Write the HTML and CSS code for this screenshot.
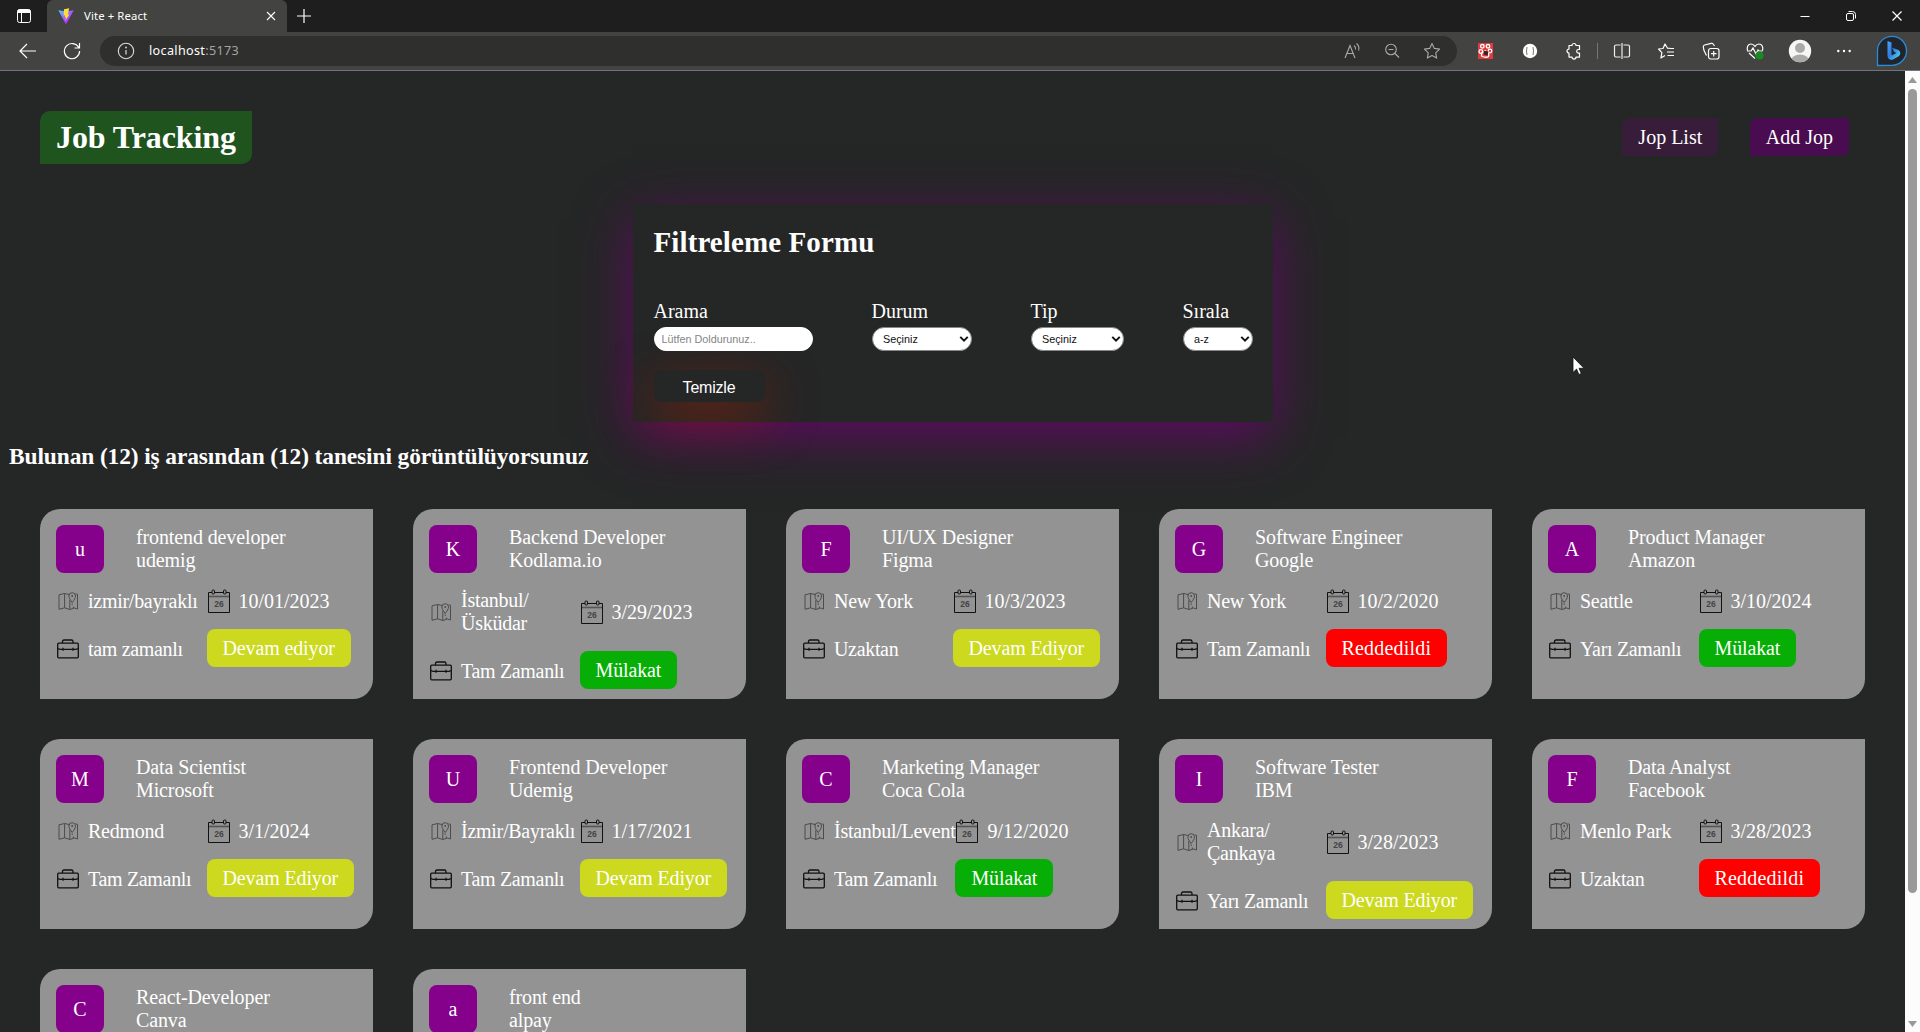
FILE: index.html
```html
<!DOCTYPE html>
<html lang="tr">
<head>
<meta charset="UTF-8">
<title>Vite + React</title>
<link rel="stylesheet" href="styles.css">
</head>
<body>
<svg class="sprite" aria-hidden="true">
  <symbol id="map" viewBox="0 0 24 24">
    <g fill="none" stroke="#4c4c4c" stroke-width="1">
      <path d="M13.500 5.600 8.600 4.500 3 5.800V20.300l5.600-1.500 5.200 1.700 4.700-1.500 3 1V5.200l-2-.3M8.600 4.500v14.300M13.800 11v9.500"/>
      <path d="M16.200 13.500C14.200 10.800 12.900 9 12.900 7a3.300 3.300 0 0 1 6.600 0c0 2-1.300 3.800-3.300 6.500z"/>
      <path d="M16.200 14.500v1.500M17.300 17.500v1.500" stroke-dasharray="1.500 1"/>
    </g>
    <circle cx="16.200" cy="7" r=".9" fill="#4c4c4c"/>
  </symbol>
  <symbol id="calendar" viewBox="0 0 24 24">
    <path d="M1.500 3.500h21v20h-21z" fill="none" stroke="#111" stroke-width="1"/>
    <path d="M2 7.500h20" stroke="#555" stroke-width="1.600"/>
    <rect x="5" y="1" width="2.500" height="4" rx="1" fill="#929292" stroke="#111"/>
    <rect x="16.500" y="1" width="2.500" height="4" rx="1" fill="#929292" stroke="#111"/>
    <text x="12" y="18" text-anchor="middle" font-family="Liberation Sans, sans-serif" font-weight="bold" font-size="8.500" fill="#444">26</text>
  </symbol>
  <symbol id="case" viewBox="0 0 24 24">
    <g fill="none" stroke="#111" stroke-width="1.300">
      <rect x="1.700" y="6.200" width="20.600" height="14.600" rx="1"/>
      <path d="M6.500 6V4.600Q6.500 3 8 3h7.500Q17 3 17 4.600V6M1.700 11.500 4 12.300h16l2.300-.8M7 10.700v3M17 10.700v3"/>
    </g>
  </symbol>
  <symbol id="chevron" viewBox="0 0 8 6"><path d="M1 1.300 4 4.300 7 1.300" fill="none" stroke="#111" stroke-width="1.600"/></symbol>
</svg>

<header class="browser">
  <div class="tabstrip">
    <div class="workspace"><svg width="16" height="16" viewBox="0 0 16 16"><rect x="1.500" y="1.500" width="13" height="13" rx="2" fill="none" stroke="#fff"/><path d="M1.500 3.500a2 2 0 0 1 2-2h9a2 2 0 0 1 2 2V5h-13z" fill="#fff"/><path d="M5.500 5v9" stroke="#fff"/></svg></div>
    <div class="tab">
      <svg width="16" height="16" viewBox="0 0 16 16"><defs><linearGradient id="vite" x1="0" y1="0" x2="1" y2="1"><stop offset="0" stop-color="#41d1ff"/><stop offset=".7" stop-color="#bd34fe"/></linearGradient></defs><path d="M.3 2.300 7.500 15.600q.5.600 1 0L15.700 2.300 8 3.600z" fill="url(#vite)"/><path d="M11.200.2 6 1.200 5.600 7.600l1.600-.3-.4 2.200 1.300-.3L7.300 12.800 11.500 6.200l-1.700.3z" fill="#ffdd35"/></svg>
      <span class="tab-title">Vite + React</span>
      <svg class="tab-close" width="10" height="10" viewBox="0 0 10 10"><path d="m1 1 8 8M9 1 1 9" stroke="#fff" stroke-width="1.100"/></svg>
    </div>
    <svg class="new-tab" width="14" height="14" viewBox="0 0 14 14"><path d="M7 0v14M0 7h14" stroke="#fff" stroke-width="1.200"/></svg>
    <div class="window-controls">
      <svg width="12" height="12" viewBox="0 0 12 12"><path d="M1.500 6.500h9" stroke="#fff"/></svg>
      <svg width="12" height="12" viewBox="0 0 12 12"><path d="M3.500 1.500h4a3 3 0 0 1 3 3v4" fill="none" stroke="#fff"/><rect x="1.500" y="3.500" width="7" height="7" rx="1.500" fill="none" stroke="#fff"/></svg>
      <svg width="12" height="12" viewBox="0 0 12 12"><path d="m1.500 1.500 9 9m0-9-9 9" stroke="#fff" stroke-width="1.200"/></svg>
    </div>
  </div>
  <div class="toolbar">
    <svg class="back" width="18" height="16" viewBox="0 0 18 16"><path d="M17 8H1.500M8 1 1 8l7 7" fill="none" stroke="#fff" stroke-width="1.200"/></svg>
    <svg class="reload" width="18" height="18" viewBox="0 0 18 18"><path d="M15.700 5.500A7.600 7.600 0 1 0 16.600 9M16.500 1v5h-5" fill="none" stroke="#fff" stroke-width="1.200"/></svg>
    <div class="address">
      <svg width="18" height="18" viewBox="0 0 18 18"><circle cx="9" cy="9" r="7.700" fill="none" stroke="#ddd" stroke-width="1.100"/><path d="M9 8v4.500" stroke="#ddd" stroke-width="1.200"/><circle cx="9" cy="5.500" r=".9" fill="#ddd"/></svg>
      <span class="url">localhost<span class="port">:5173</span></span>
      <div class="address-icons">
        <svg width="18" height="18" viewBox="0 0 18 18"><path d="M2 16 7 3.500 12 16M4 11.500h6.200M11 3.500q2 1.600 1.500 4M13.500 1.500q3.200 2.500 2.200 7" fill="none" stroke="#aaa" stroke-width="1.100"/></svg>
        <svg width="18" height="18" viewBox="0 0 18 18"><circle cx="8" cy="7.500" r="5.300" fill="none" stroke="#aaa" stroke-width="1.100"/><path d="M5.500 7.500h5M12 11.500l4 4" stroke="#aaa" stroke-width="1.100"/></svg>
        <svg width="18" height="18" viewBox="0 0 18 18"><path d="m9 1.500 2.300 4.900 5.300.7-3.900 3.700 1 5.300L9 13.500l-4.700 2.600 1-5.300L1.400 7.100l5.300-.7z" fill="none" stroke="#aaa" stroke-width="1.100" stroke-linejoin="round"/></svg>
      </div>
    </div>
    <div class="extensions">
      <svg width="18" height="18" viewBox="0 0 18 18"><rect x="2" y="1" width="15" height="16" fill="#e2393d"/><g fill="none" stroke="#fff" stroke-width="1.300"><circle cx="6.300" cy="4.300" r="1.800"/><circle cx="12" cy="4.300" r="1.800"/><circle cx="4.800" cy="9.500" r="1.800"/><circle cx="14" cy="9" r="1.800"/><path d="M6 14.500q-2-3 3-6 5 3 3.500 6-2 1.500-6.500 0z"/></g><path d="m7.500 8.500 5 1-1 4-3.500-1z" fill="#372222"/></svg>
      <svg width="18" height="18" viewBox="0 0 18 18"><circle cx="9" cy="9" r="7.200" fill="#fff"/><path d="M6 5q-1 4 0 8M12 5q1 4 0 8" fill="none" stroke="#777"/></svg>
      <svg width="18" height="18" viewBox="0 0 18 18"><path d="M4 3.500h3a2 2 0 0 1 4 0h3.500v4h-1a1.700 1.700 0 0 0 0 3.600h1v4H11a2 2 0 0 1-4 0H4v-4a2 2 0 0 1 0-4z" fill="none" stroke="#fff" stroke-width="1.200" stroke-linejoin="round"/></svg>
      <span class="divider"></span>
      <svg width="18" height="18" viewBox="0 0 18 18"><path d="M7.500 3H3Q1.500 3 1.500 4.500v9Q1.500 15 3 15h4.500M10.500 3H15q1.500 0 1.500 1.500v9q0 1.500-1.500 1.500h-4.500M9 1v16" fill="none" stroke="#eee" stroke-width="1.200"/></svg>
      <svg width="18" height="18" viewBox="0 0 18 18"><path d="m14 6.500-3.500-.3L8 2 6 6.500 1.500 7l3.400 3.600-1 5.400L8 13.500M11 6.500h6M10 10h7M10.500 13.500H17" fill="none" stroke="#fff" stroke-width="1.200" stroke-linejoin="round"/></svg>
      <svg width="18" height="18" viewBox="0 0 18 18"><rect x="6.500" y="6.500" width="10.500" height="10.500" rx="2.200" fill="none" stroke="#fff" stroke-width="1.200"/><path d="M11.700 9v5.500M9 11.700h5.500M4.500 13.500 2 8.500 1.300 5q-.2-1.500 1.300-2l6.500-1.700q1.500-.3 2.200 1L12.500 4" fill="none" stroke="#fff" stroke-width="1.200"/></svg>
      <svg width="18" height="18" viewBox="0 0 18 18"><path d="M1.500 8.500C.5 5 2 2 5 2q2.500 0 4 2.300Q10.500 2 13 2c3 0 4.500 3 3.500 6.500M1 9h4l2-3 3 6 2-4 1 1h3.500M3 11l6 5.500" fill="none" stroke="#fff" stroke-width="1.200"/><circle cx="13.500" cy="13.500" r="4" fill="#188a20"/></svg>
      <svg class="profile" width="24" height="24" viewBox="0 0 24 24"><defs><clipPath id="face"><circle cx="12" cy="12" r="11.200"/></clipPath></defs><g clip-path="url(#face)"><path fill="#f7f7f4" d="M0 0h24v24H0z"/><circle cx="12" cy="9" r="5" fill="#aaa"/><ellipse cx="12" cy="21" rx="8.500" ry="5.500" fill="#aaa"/></g></svg>
      <svg width="18" height="18" viewBox="0 0 18 18"><g fill="#fff"><circle cx="3.300" cy="9" r="1.200"/><circle cx="9" cy="9" r="1.200"/><circle cx="14.700" cy="9" r="1.200"/></g></svg>
      <svg class="bing" width="32" height="32" viewBox="0 0 32 32"><defs><linearGradient id="bingFill" x1="0" y1="0" x2="1" y2="1"><stop offset="0" stop-color="#4aa4f5"/><stop offset=".45" stop-color="#2d7de8"/><stop offset="1" stop-color="#55e4e8"/></linearGradient></defs><path d="M1.500 30.500V16A14.500 14.500 0 1 1 16 30.300z" fill="#22242b" stroke="#2c8bd8" stroke-width="1.300"/><path d="m11.500 6 4 1.500v13l5-2.600-2.500-1.200-1.800-4 6.300 2.300q2 1 1.800 3.500-.3 2-2 3L16 25q-4.500-.5-4.500-4.500z" fill="url(#bingFill)"/></svg>
    </div>
  </div>
</header>

<div class="viewport">
  <div class="page">
    <nav class="nav">
      <h1 class="brand">Job Tracking</h1>
      <div class="links"><a class="link link-active">Jop List</a><a class="link">Add Jop</a></div>
    </nav>

    <form class="filter">
      <h2 class="filter-title">Filtreleme Formu</h2>
      <div class="fields">
        <div class="field field-search"><label for="q">Arama</label><input id="q" class="control" type="text" placeholder="Lütfen Doldurunuz.."></div>
        <div class="field field-status"><label for="status">Durum</label><div class="picker"><select id="status" class="control"><option>Seçiniz</option></select><svg class="arrow"><use href="#chevron"/></svg></div></div>
        <div class="field field-type"><label for="type">Tip</label><div class="picker"><select id="type" class="control"><option>Seçiniz</option></select><svg class="arrow"><use href="#chevron"/></svg></div></div>
        <div class="field field-sort"><label for="sort">Sırala</label><div class="picker"><select id="sort" class="control"><option>a-z</option></select><svg class="arrow"><use href="#chevron"/></svg></div></div>
      </div>
      <button class="clear" type="button">Temizle</button>
    </form>

    <h3 class="summary">Bulunan (12) iş arasından (12) tanesini görüntülüyorsunuz</h3>

    <main class="jobs">
      <article class="job"><div class="job-head"><div class="avatar">u</div><div class="role">frontend developer<br>udemig</div></div><div class="details"><p class="info place"><svg class="icon"><use href="#map"/></svg><span>izmir/bayraklı</span></p><p class="info"><svg class="icon"><use href="#calendar"/></svg>10/01/2023</p><p class="info kind"><svg class="icon"><use href="#case"/></svg>tam zamanlı</p><span class="status pending">Devam ediyor</span></div></article>
      <article class="job"><div class="job-head"><div class="avatar">K</div><div class="role">Backend Developer<br>Kodlama.io</div></div><div class="details"><p class="info place"><svg class="icon"><use href="#map"/></svg><span>İstanbul/<br>Üsküdar</span></p><p class="info"><svg class="icon"><use href="#calendar"/></svg>3/29/2023</p><p class="info kind"><svg class="icon"><use href="#case"/></svg>Tam Zamanlı</p><span class="status interview">Mülakat</span></div></article>
      <article class="job"><div class="job-head"><div class="avatar">F</div><div class="role">UI/UX Designer<br>Figma</div></div><div class="details"><p class="info place"><svg class="icon"><use href="#map"/></svg><span>New York</span></p><p class="info"><svg class="icon"><use href="#calendar"/></svg>10/3/2023</p><p class="info kind"><svg class="icon"><use href="#case"/></svg>Uzaktan</p><span class="status pending">Devam Ediyor</span></div></article>
      <article class="job"><div class="job-head"><div class="avatar">G</div><div class="role">Software Engineer<br>Google</div></div><div class="details"><p class="info place"><svg class="icon"><use href="#map"/></svg><span>New York</span></p><p class="info"><svg class="icon"><use href="#calendar"/></svg>10/2/2020</p><p class="info kind"><svg class="icon"><use href="#case"/></svg>Tam Zamanlı</p><span class="status rejected">Reddedildi</span></div></article>
      <article class="job"><div class="job-head"><div class="avatar">A</div><div class="role">Product Manager<br>Amazon</div></div><div class="details"><p class="info place"><svg class="icon"><use href="#map"/></svg><span>Seattle</span></p><p class="info"><svg class="icon"><use href="#calendar"/></svg>3/10/2024</p><p class="info kind"><svg class="icon"><use href="#case"/></svg>Yarı Zamanlı</p><span class="status interview">Mülakat</span></div></article>
      <article class="job"><div class="job-head"><div class="avatar">M</div><div class="role">Data Scientist<br>Microsoft</div></div><div class="details"><p class="info place"><svg class="icon"><use href="#map"/></svg><span>Redmond</span></p><p class="info"><svg class="icon"><use href="#calendar"/></svg>3/1/2024</p><p class="info kind"><svg class="icon"><use href="#case"/></svg>Tam Zamanlı</p><span class="status pending">Devam Ediyor</span></div></article>
      <article class="job"><div class="job-head"><div class="avatar">U</div><div class="role">Frontend Developer<br>Udemig</div></div><div class="details"><p class="info place"><svg class="icon"><use href="#map"/></svg><span>İzmir/Bayraklı</span></p><p class="info"><svg class="icon"><use href="#calendar"/></svg>1/17/2021</p><p class="info kind"><svg class="icon"><use href="#case"/></svg>Tam Zamanlı</p><span class="status pending">Devam Ediyor</span></div></article>
      <article class="job"><div class="job-head"><div class="avatar">C</div><div class="role">Marketing Manager<br>Coca Cola</div></div><div class="details"><p class="info place"><svg class="icon"><use href="#map"/></svg><span>İstanbul/Levent</span></p><p class="info"><svg class="icon"><use href="#calendar"/></svg>9/12/2020</p><p class="info kind"><svg class="icon"><use href="#case"/></svg>Tam Zamanlı</p><span class="status interview">Mülakat</span></div></article>
      <article class="job"><div class="job-head"><div class="avatar">I</div><div class="role">Software Tester<br>IBM</div></div><div class="details"><p class="info place"><svg class="icon"><use href="#map"/></svg><span>Ankara/<br>Çankaya</span></p><p class="info"><svg class="icon"><use href="#calendar"/></svg>3/28/2023</p><p class="info kind"><svg class="icon"><use href="#case"/></svg>Yarı Zamanlı</p><span class="status pending">Devam Ediyor</span></div></article>
      <article class="job"><div class="job-head"><div class="avatar">F</div><div class="role">Data Analyst<br>Facebook</div></div><div class="details"><p class="info place"><svg class="icon"><use href="#map"/></svg><span>Menlo Park</span></p><p class="info"><svg class="icon"><use href="#calendar"/></svg>3/28/2023</p><p class="info kind"><svg class="icon"><use href="#case"/></svg>Uzaktan</p><span class="status rejected">Reddedildi</span></div></article>
      <article class="job"><div class="job-head"><div class="avatar">C</div><div class="role">React-Developer<br>Canva</div></div></article>
      <article class="job"><div class="job-head"><div class="avatar">a</div><div class="role">front end<br>alpay</div></div></article>
    </main>
  </div>
  <div class="scrollbar">
    <svg width="9" height="6" viewBox="0 0 9 6"><path d="M4.500 0 9 6H0z" fill="#999"/></svg>
    <div class="thumb"></div>
    <svg class="down" width="9" height="6" viewBox="0 0 9 6"><path d="M4.500 6 9 0H0z" fill="#999"/></svg>
  </div>
</div>
<svg class="cursor" width="13" height="20" viewBox="0 0 13 20"><path d="M1 1v15.500l3.600-3.400 2.300 5.400 2.400-1L7 12.300h5z" fill="#fff" stroke="#111" stroke-width=".8"/></svg>
</body>
</html>
```
FILE: styles.css
```css
* { box-sizing: border-box; }

body {
  margin: 0;
  height: 1032px;
  display: flex;
  flex-direction: column;
  overflow: hidden;
  background: #252626;
  color: #fff;
  font: 20px/23px "Liberation Serif", "Times New Roman", serif;
}

h1, h2, h3, p { margin: 0; }
svg { display: block; flex: none; }
.sprite { display: none; }

/* Browser frame */
.browser {
  flex: none;
  height: 71px;
  background: #434341;
  border-bottom: 1px solid #73737f;
  font-family: "Noto Sans", "Open Sans", sans-serif;
}
.tabstrip { display: flex; align-items: center; height: 32px; background: #1e1e1e; }
.workspace { width: 47px; padding-left: 16px; }
.tab {
  display: flex;
  align-items: center;
  width: 240px;
  height: 32px;
  padding: 0 11px;
  background: #434341;
  border-radius: 6px 6px 0 0;
}
.tab-title { margin-left: 10px; font-size: 11.3px; line-height: 16px; letter-spacing: .12px; }
.tab-close { margin-left: auto; }
.new-tab { margin-left: 10px; }
.window-controls { display: flex; gap: 34px; margin-left: auto; padding-right: 17px; }
.toolbar { display: flex; align-items: center; height: 38px; }
.back { margin-left: 19px; }
.reload { margin-left: 26px; }
.address {
  display: flex;
  align-items: center;
  width: 1357px;
  height: 30px;
  margin-left: 19px;
  padding: 0 16px 0 17px;
  border-radius: 15px;
  background: #2f2f2e;
}
.url { margin-left: 14px; font-size: 12.6px; line-height: 18px; letter-spacing: .33px; }
.port { color: #a4a4a4; }
.address-icons { display: flex; gap: 22px; margin-left: auto; }
.extensions { display: flex; align-items: center; flex: 1; gap: 26.500px; padding-left: 19px; }
.divider { width: 1px; height: 16px; margin: 0 -11.500px 0 -13px; background: #777; }
.profile { margin: 0 -3px; }
.bing { margin-left: -4px; }

/* Page */
.viewport { display: flex; flex: 1; min-height: 0; }
.page { flex: 1; overflow: hidden; }
.nav { display: flex; align-items: center; justify-content: space-between; padding: 40px 56px 40px 40px; }
.brand {
  padding: 8px 16px;
  font-size: 32px;
  line-height: 37px;
  letter-spacing: -.1px;
  border-radius: 10px 0;
  background: #1f541f;
}
.links { display: flex; gap: 31.500px; margin-top: -1px; }
.link { padding: 8px 16px; line-height: 22px; border-radius: 8px 0; background: #4a0c51; }
.link-active { background: #371d39; }

.filter {
  width: 640px;
  height: 218px;
  margin: 0 auto;
  padding: 21px 20px 0 21px;
  box-shadow: 0 15px 50px rgba(112, 0, 118, .75);
}
.filter-title { font-size: 29px; line-height: 35px; letter-spacing: .1px; }
.fields { display: flex; justify-content: space-between; margin-top: 40px; }
.field { display: flex; flex-direction: column; gap: 4px; }
.field-search { width: 159px; }
.field-status { width: 100px; }
.field-type { width: 93px; }
.field-sort { width: 70px; }
.control {
  width: 100%;
  height: 24px;
  border: 1px solid #888;
  border-radius: 12px;
  background: #fff;
  color: #111;
  font: 10.8px "Liberation Sans", Arial, sans-serif;
  appearance: none;
}
input.control { padding: 0 7px; border-color: #fff; }
input.control::placeholder { color: #858585; }
select.control { padding: 0 10.500px; }
.picker { display: grid; align-items: center; }
.picker > * { grid-area: 1 / 1; }
.arrow { width: 10px; height: 8px; justify-self: end; margin-right: 3px; pointer-events: none; }
.clear {
  display: block;
  width: 111px;
  height: 32px;
  margin-top: 19px;
  padding: 3px 0 0;
  border: 0;
  border-radius: 8px;
  background: #252626;
  color: #fff;
  font: 16px "Liberation Sans", Arial, sans-serif;
  letter-spacing: -.2px;
  box-shadow: 0 15px 50px rgba(160, 30, 0, .6);
}

.summary { margin-top: 20px; padding-left: 9px; font-size: 23.4px; line-height: 28px; letter-spacing: -.1px; }

.jobs { display: grid; grid-template-columns: repeat(5, 1fr); gap: 40px; padding: 39px 40px 40px; }
.job { height: 190px; padding: 16px; border-radius: 20px 0; background: #939393; }
.job-head { display: flex; align-items: center; gap: 32px; }
.role { padding-bottom: 1px; letter-spacing: -.12px; }
.avatar {
  display: grid;
  place-items: center;
  width: 48px;
  height: 48px;
  border-radius: 8px;
  background: #85008b;
}
.details {
  display: grid;
  grid-template-columns: 1fr 1fr;
  grid-template-rows: auto 40px;
  row-gap: 16px;
  margin-top: 16px;
  white-space: nowrap;
}
.info { display: flex; align-items: center; gap: 8px; min-height: 24px; }
.place { letter-spacing: -.27px; }
.kind { letter-spacing: -.33px; }
.icon { width: 24px; height: 24px; }
.status {
  justify-self: start;
  align-self: start;
  height: 38px;
  padding: 0 16px;
  line-height: 38px;
  letter-spacing: -.13px;
  border-radius: 8px;
}
.pending { background: #ccd91f; }
.interview { background: #06ae06; }
.rejected { background: #f00; letter-spacing: .2px; }

.scrollbar {
  display: flex;
  flex-direction: column;
  align-items: center;
  width: 15px;
  padding: 6px 0 5px;
  background: #fcfcfc;
}
.thumb { width: 9px; height: 804px; margin-top: 6px; border-radius: 5px; background: #999; }
.down { margin-top: auto; }

.cursor { position: absolute; left: 1572px; top: 356px; }
```
